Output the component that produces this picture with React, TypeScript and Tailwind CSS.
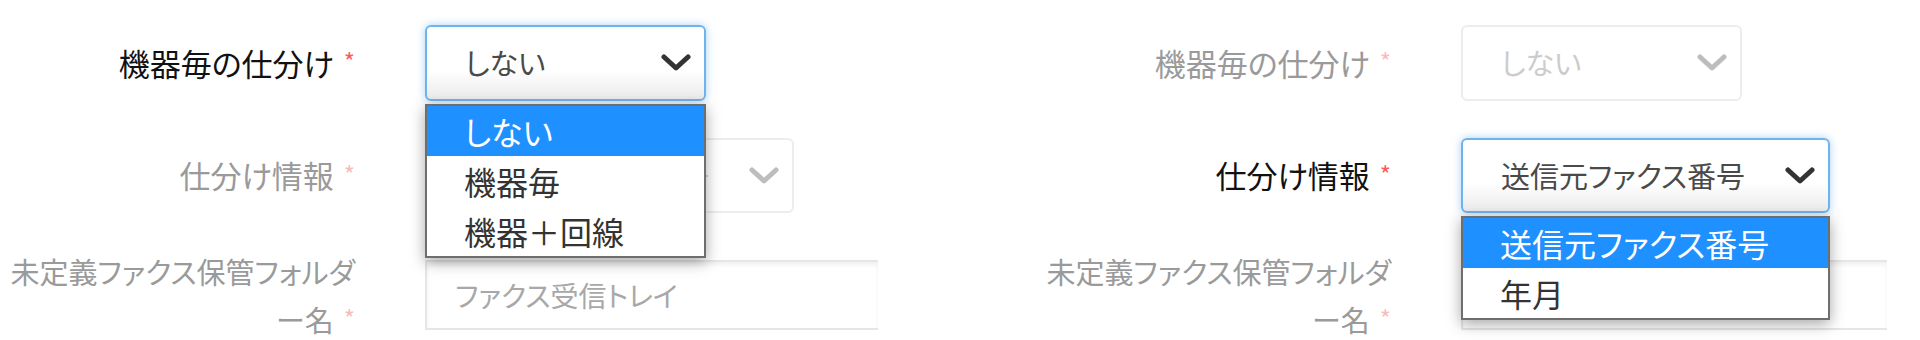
import React from 'react';

const FONT = "font-['Noto_Sans_CJK_JP','Noto_Sans_CJK_SC',sans-serif] [font-feature-settings:'palt']";

const Chevron = ({ active }: { active: boolean }) => (
  <svg width="30" height="18" viewBox="0 0 30 18" fill="none" className="shrink-0">
    <path d="M3 3l12 11L27 3" stroke={active ? '#333333' : '#bdbdbd'} strokeWidth="5" strokeLinecap="round" strokeLinejoin="round" />
  </svg>
);

interface SelectBoxProps {
  value: string;
  active: boolean;
  width: string;
  height: string;
  options?: string[];
}

const SelectBox: React.FC<SelectBoxProps> = ({ value, active, width, height, options }) => (
  <div className={`relative ${width}`}>
    <div
      className={`flex items-center justify-between rounded-[6px] border-2 pl-[38px] pr-[13px] text-[29px] ${height} ${
        active
          ? 'border-[#70b2ea] bg-linear-to-b from-white from-60% to-[#ebebeb] text-[#4a4a4a] shadow-[0_0_9px_rgba(102,175,233,0.55)]'
          : 'border-[#ededed] bg-white text-[#cccccc]'
      }`}
    >
      <span className="whitespace-nowrap">{value}</span>
      <Chevron active={active} />
    </div>
    {options && (
      <ul className="absolute left-0 top-full z-10 mt-[3px] w-full border-2 border-[#6e6e6e] bg-white shadow-[0_4px_14px_rgba(0,0,0,0.35)]">
        {options.map((o, i) => (
          <li
            key={o}
            className={`flex h-[50px] items-center pl-[37px] text-[32px] whitespace-nowrap ${
              i === 0 ? 'bg-[#1e90ff] text-white' : 'text-[#333333]'
            }`}
          >
            {o}
          </li>
        ))}
      </ul>
    )}
  </div>
);

const Star = ({ active }: { active: boolean }) => (
  <span className={`ml-[10px] inline-block -translate-y-[6px] align-middle text-[24px] leading-none ${active ? 'text-[#ff5a5a]' : 'text-[#f7bcbc]'}`}>*</span>
);

const Label = ({ text, active }: { text: string; active: boolean }) => (
  <div className={`w-[355px] shrink-0 text-right text-[31px] ${active ? 'text-[#111111]' : 'text-[#9a9a9a]'}`}>
    {text}
    <Star active={active} />
  </div>
);

interface PanelProps {
  firstActive: boolean;
  inputWidth: string;
  panelWidth: string;
}

const Panel: React.FC<PanelProps> = ({ firstActive, inputWidth, panelWidth }) => (
  <div className={`flex flex-col pt-[25px] ${panelWidth}`}>
    <div className="flex h-[76px] items-center">
      <Label text="機器毎の仕分け" active={firstActive} />
      <div className="ml-[70px] z-20">
        <SelectBox
          value="しない"
          active={firstActive}
          width="w-[281px]"
          height="h-[76px]"
          options={firstActive ? ['しない', '機器毎', '機器＋回線'] : undefined}
        />
      </div>
    </div>

    <div className="mt-[37px] flex h-[75px] items-center">
      <Label text="仕分け情報" active={!firstActive} />
      <div className="ml-[70px] z-10">
        <SelectBox
          value="送信元ファクス番号"
          active={!firstActive}
          width="w-[369px]"
          height="h-[75px]"
          options={!firstActive ? ['送信元ファクス番号', '年月'] : undefined}
        />
      </div>
    </div>

    <div className="mt-[34px] flex items-start">
      <div className="w-[355px] shrink-0 text-right text-[29px] leading-[48px] text-[#9a9a9a]">
        <span className="whitespace-nowrap">未定義ファクス保管フォルダ</span>
        <br />
        ー名
        <Star active={false} />
      </div>
      <div
        className={`ml-[70px] mt-[13px] flex h-[70px] items-center border-2 border-r-0 border-[#e6e6e6] bg-white pl-[28px] text-[28px] text-[#a8a8a8] shadow-[inset_0_3px_4px_rgba(0,0,0,0.06)] ${inputWidth}`}
      >
        <span className="whitespace-nowrap">ファクス受信トレイ</span>
      </div>
    </div>
  </div>
);

export default function App() {
  return (
    <div className={`flex h-[340px] w-[1920px] overflow-hidden bg-white ${FONT}`}>
      <Panel firstActive={true} inputWidth="w-[453px]" panelWidth="w-[1036px] shrink-0" />
      <Panel firstActive={false} inputWidth="w-[426px]" panelWidth="flex-1" />
    </div>
  );
}
